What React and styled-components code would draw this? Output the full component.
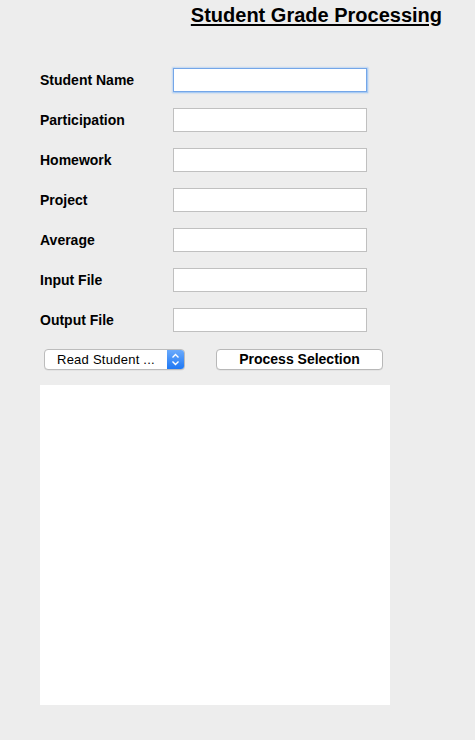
import React from "react";
import styled, { createGlobalStyle } from "styled-components";

const Global = createGlobalStyle`
  html, body { margin: 0; padding: 0; background: #ededed; }
  body { font-family: "Liberation Sans", Arial, sans-serif; color: #000; }
  * { box-sizing: border-box; }
`;

const Page = styled.div`
  width: 475px;
  min-height: 740px;
  background: #ededed;
  display: flex;
  flex-direction: column;
`;

const Header = styled.div`
  display: flex;
  justify-content: flex-end;
  padding: 3px 33px 0 0;
`;

const Title = styled.h1`
  margin: 0;
  font-size: 20px;
  line-height: 24px;
  font-weight: 700;
  text-decoration: underline;
  text-underline-offset: 2px;
  text-decoration-thickness: 2px;
`;

const Form = styled.div`
  margin: 41px 0 0 40px;
  display: grid;
  grid-template-columns: 133px 194px;
  grid-auto-rows: 24px;
  row-gap: 16px;
  align-items: center;
`;

const Label = styled.label`
  font-size: 14px;
  font-weight: 700;
  line-height: 16px;
`;

const Field = styled.input`
  width: 194px;
  height: 24px;
  margin: 0;
  padding: 2px 4px;
  font: 13px "Liberation Sans", Arial, sans-serif;
  background: #fff;
  border: 1px solid ${(p) => (p.$focused ? "#74a6e8" : "#c0c0c0")};
  box-shadow: ${(p) => (p.$focused ? "0 0 1.5px 1.5px #a9cbf3" : "none")};
  outline: none;
  border-radius: 0;
`;

const Actions = styled.div`
  margin: 17px 0 0 44px;
  display: flex;
  align-items: center;
  gap: 31px;
  height: 21px;
`;

const Select = styled.div`
  width: 141px;
  height: 21px;
  display: flex;
  background: #fff;
  border: 1px solid #bcbcbc;
  border-radius: 4px;
  overflow: hidden;
  box-shadow: 0 0.5px 0.5px rgba(0, 0, 0, 0.08);
`;

const SelectText = styled.span`
  flex: 1;
  padding-left: 12px;
  font-size: 13px;
  line-height: 19px;
  letter-spacing: 0.25px;
  white-space: nowrap;
`;

const SelectArrow = styled.span`
  width: 17px;
  background: linear-gradient(#6aaafc, #1f78f4);
  display: flex;
  align-items: center;
  justify-content: center;
`;

const Button = styled.button`
  width: 167px;
  height: 21px;
  margin: 0;
  padding: 0;
  background: #fff;
  border: 1px solid #b8b8b8;
  border-radius: 4px;
  font: 700 14px/19px "Liberation Sans", Arial, sans-serif;
  color: #000;
  box-shadow: 0 0.5px 0.5px rgba(0, 0, 0, 0.08);
`;

const Output = styled.div`
  margin: 15px 0 0 40px;
  width: 350px;
  height: 320px;
  background: #fff;
`;

const fields = [
  "Student Name",
  "Participation",
  "Homework",
  "Project",
  "Average",
  "Input File",
  "Output File",
];

export default function App() {
  return (
    <Page>
      <Global />
      <Header>
        <Title>Student Grade Processing</Title>
      </Header>
      <Form>
        {fields.map((f, i) => (
          <React.Fragment key={f}>
            <Label>{f}</Label>
            <Field $focused={i === 0} />
          </React.Fragment>
        ))}
      </Form>
      <Actions>
        <Select>
          <SelectText>Read Student ...</SelectText>
          <SelectArrow>
            <svg width="9" height="13" viewBox="0 0 9 13">
              <path
                d="M1.5 4.5 L4.5 1.5 L7.5 4.5 M1.5 8.5 L4.5 11.5 L7.5 8.5"
                fill="none"
                stroke="#fff"
                strokeWidth="1.4"
              />
            </svg>
          </SelectArrow>
        </Select>
        <Button>Process Selection</Button>
      </Actions>
      <Output />
    </Page>
  );
}
